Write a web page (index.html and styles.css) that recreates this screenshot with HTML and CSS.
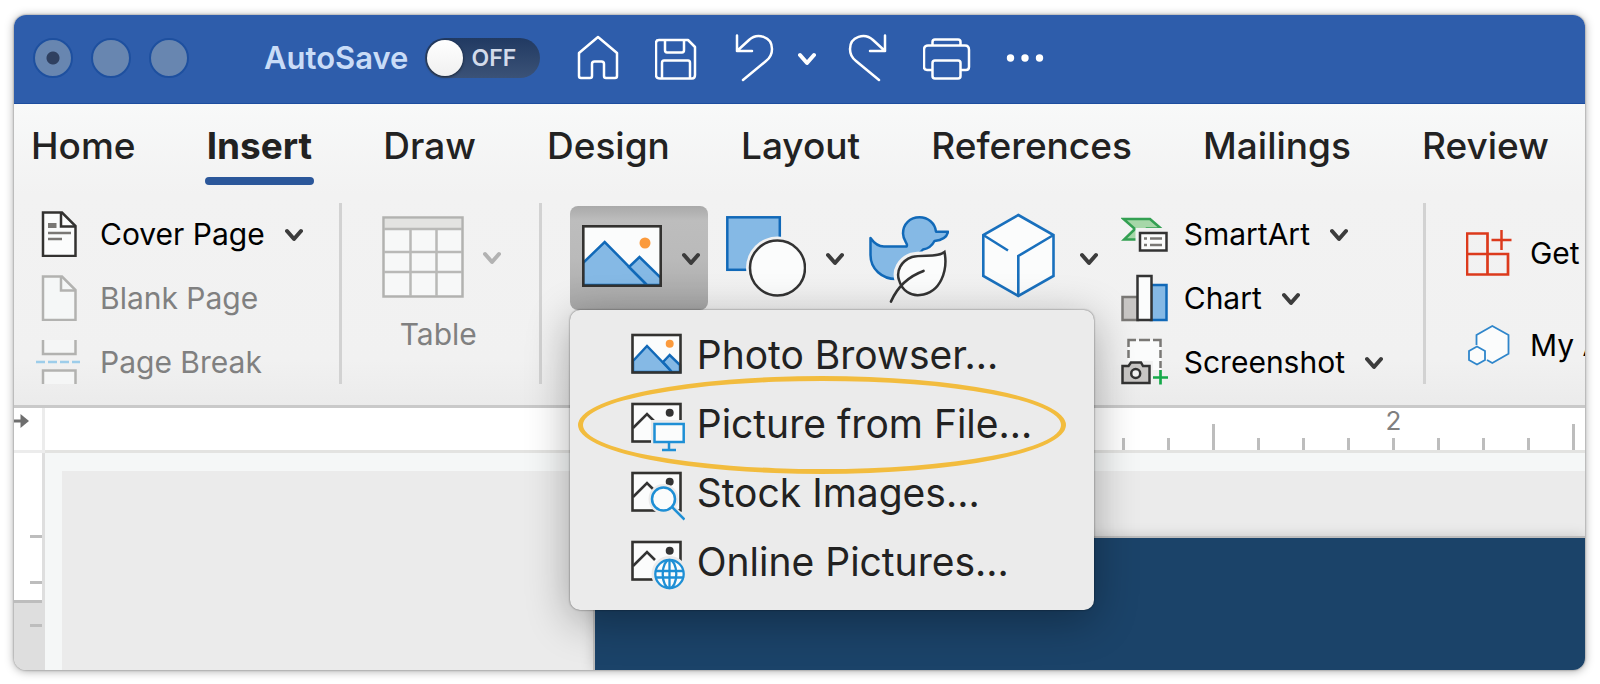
FILE: index.html
```html
<!DOCTYPE html>
<html lang="en">
<head>
<meta charset="utf-8">
<meta name="viewport" content="width=device-width, initial-scale=1">
<title>Document – Insert</title>
<link rel="stylesheet" href="styles.css">
</head>
<body>
<svg class="defs" aria-hidden="true">
  <symbol id="chevron" viewBox="0 0 18 16"><path d="M2 5 L9 13 L16 5" fill="none" stroke="currentColor" stroke-width="4" stroke-linecap="round" stroke-linejoin="round"/></symbol>
  <symbol id="mono-picture" viewBox="0 0 54 52">
    <rect x="1.500" y="4" width="48" height="37.500" fill="#fbfcfc" stroke="#333230" stroke-width="2.600"/>
    <path d="M2 28 L16 14 L24 22" fill="none" stroke="#333" stroke-width="2.600"/>
    <circle cx="38.700" cy="12.700" r="4" fill="#333"/>
  </symbol>
</svg>
<main class="window">
  <header class="titlebar">
    <div class="lights">
      <button class="light light-edited" aria-label="Close"></button>
      <button class="light" aria-label="Minimize"></button>
      <button class="light" aria-label="Zoom"></button>
    </div>
    <label class="autosave">AutoSave
      <span class="switch"><input type="checkbox" class="switch-input"><span class="switch-state">OFF</span></span>
    </label>
    <div class="quick">
      <button class="tool" aria-label="Home"><svg width="42" height="46" viewBox="577 34 42 46"><path d="M598 36 L617 52 V75 Q617 77 615 77 H606 Q604 77 604 75 V63 Q604 60.500 601.500 60.500 H594.500 Q592 60.500 592 63 V75 Q592 77 590 77 H581 Q579 77 579 75 V52 Z"/></svg></button>
      <button class="tool tool-save" aria-label="Save"><svg width="42" height="46" viewBox="655 34 42 46"><path d="M659 39 H688 L695 46 V74 Q695 77.500 692 77.500 H660 Q656 77.500 656 74 V42 Q656 39 659 39 Z M665 39 V49 Q665 51.500 667 51.500 H682 Q684 51.500 684 49 V39 M662 77 V62 Q662 59.500 664 59.500 H688 Q690 59.500 690 62 V77"/></svg></button>
      <button class="tool tool-undo" aria-label="Undo"><svg width="40" height="50" viewBox="736 33 40 50"><path d="M738 35.500 V51 H753 M738 51 L750 40 C758 32.500 773 36 773 49 C773 54 771 58 767 61 L744 80"/></svg></button>
      <button class="tool tool-more" aria-label="Undo history"><svg width="18" height="16"><use href="#chevron"/></svg></button>
      <button class="tool tool-redo" aria-label="Redo"><svg width="40" height="50" viewBox="736 33 40 50"><path transform="translate(1511 0) scale(-1 1)" d="M738 35.500 V51 H753 M738 51 L750 40 C758 32.500 773 36 773 49 C773 54 771 58 767 61 L744 80"/></svg></button>
      <button class="tool tool-print" aria-label="Print"><svg width="48" height="46" viewBox="923 34 48 46"><path d="M932.500 69 H927 Q924 69 924 66 V49 Q924 44.500 928 44.500 H965 Q969 44.500 969 49 V66 Q969 69 966 69 H960.500 M932.500 44.500 V41 Q932.500 38.500 935 38.500 H958 Q960.500 38.500 960.500 41 V44.500 M935 59.500 H958 Q960.500 59.500 960.500 62 V75 Q960.500 77.500 958 77.500 H935 Q932.500 77.500 932.500 75 V62 Q932.500 59.500 935 59.500 Z"/></svg></button>
      <button class="tool tool-dots" aria-label="More"><svg width="38" height="10" viewBox="0 0 38 10"><g fill="#fff" stroke="none"><circle cx="4.500" cy="5" r="3.700"/><circle cx="19" cy="5" r="3.700"/><circle cx="33.500" cy="5" r="3.700"/></g></svg></button>
    </div>
  </header>

  <section class="ribbon">
    <nav class="tabs">
      <button class="tab">Home</button>
      <button class="tab tab-active" aria-current="page">Insert</button>
      <button class="tab">Draw</button>
      <button class="tab">Design</button>
      <button class="tab">Layout</button>
      <button class="tab">References</button>
      <button class="tab">Mailings</button>
      <button class="tab">Review</button>
    </nav>
    <div class="groups">
      <div class="group group-pages">
        <button class="command">
          <svg width="44" height="46" viewBox="36 211 44 46"><path d="M43 212.500 H62 L75.500 226 V256 H43 Z" fill="#fbfcfc" stroke="#333230" stroke-width="2.500"/><path d="M61 212 V226.500 H75.500" fill="none" stroke="#333230" stroke-width="2.500"/><path d="M48 223 h8.500 v5 h-8.500z" fill="#7a7875"/><path d="M48 233 H71 M48 239 H62" stroke="#7a7875" stroke-width="2.500"/></svg>
          <span>Cover Page</span>
          <svg class="chevron" width="18" height="16"><use href="#chevron"/></svg>
        </button>
        <button class="command" disabled>
          <svg width="44" height="46" viewBox="36 211 44 46"><path d="M43 212.500 H62 L75.500 226 V256 H43 Z" fill="#f5f7f7" stroke="#b2b2b0" stroke-width="2.500"/><path d="M61 212 V226.500 H75.500" fill="none" stroke="#b2b2b0" stroke-width="2.500"/></svg>
          <span>Blank Page</span>
        </button>
        <button class="command" disabled>
          <svg width="44" height="46" viewBox="36 337 44 46"><path d="M43 338 V352 H75.500 V338 M43 382 V368.500 H75.500 V382" fill="#f5f6f6" stroke="#b2b2b0" stroke-width="2.500"/><path d="M36 360 h9 m3 0 h9 m3 0 h9 m3 0 h8" stroke="#9dcdea" stroke-width="2.500"/></svg>
          <span>Page Break</span>
        </button>
      </div>

      <div class="group group-table">
        <button class="big-command" disabled>
          <span class="big-row">
            <svg width="82" height="82" viewBox="381 217 82 82"><rect x="382.500" y="218.500" width="79" height="79" fill="#f7f8f8" stroke="#b2b2b0" stroke-width="2.500"/><rect x="384" y="220" width="76" height="9" fill="#e3e3e1"/><path d="M383 230 H461 M383 253 H461 M383 273 H461 M409.500 230 V297 M435.500 230 V297" stroke="#b9b9b7" stroke-width="2.500"/></svg>
            <svg class="chevron" width="18" height="16"><use href="#chevron"/></svg>
          </span>
          <span class="big-label">Table</span>
        </button>
      </div>

      <div class="group group-media">
        <div class="picture-control">
          <button class="picture-button" aria-label="Pictures" aria-haspopup="menu" aria-expanded="true">
            <svg width="80" height="66" viewBox="581 225 80 66"><rect x="582.300" y="226.300" width="77.400" height="59.400" fill="#fbfcfc"/><path d="M582 263 L603.700 242 L646 285 H582 Z" fill="#85b9e5" stroke="#1169b8" stroke-width="2.500"/><path d="M628 267 L638.500 257 L660 278 V285 H646 Z" fill="#85b9e5" stroke="#1169b8" stroke-width="2.500"/><circle cx="644" cy="243" r="5.500" fill="#fb9a3c"/><rect x="582.300" y="226.300" width="77.400" height="59.400" fill="none" stroke="#333230" stroke-width="2.600"/></svg>
            <svg class="chevron" width="18" height="16"><use href="#chevron"/></svg>
          </button>
          <div class="menu" role="menu">
            <button class="menu-item" role="menuitem">
              <svg width="54" height="52" viewBox="0 0 54 52"><rect x="1.500" y="4" width="48" height="37.500" fill="#fbfcfc"/><path d="M2 30 L16 15 L41 41 H2 Z" fill="#85b9e5" stroke="#1169b8" stroke-width="2.500"/><path d="M32 31 L38.700 24 L49 34 V41 H41 Z" fill="#85b9e5" stroke="#1169b8" stroke-width="2.500"/><circle cx="38.700" cy="12.700" r="4" fill="#fb9a3c"/><rect x="1.500" y="4" width="48" height="37.500" fill="none" stroke="#333230" stroke-width="2.600"/></svg>
              <span>Photo Browser...</span>
            </button>
            <button class="menu-item menu-item-circled" role="menuitem">
              <svg width="54" height="52" viewBox="0 0 54 52"><use href="#mono-picture"/><path d="M20 20 H54 V45 H20 Z" fill="#ebebeb"/><path d="M23.500 24 H52.700 V42 H23.500 Z" fill="#fbfcfc" stroke="#1e8fd5" stroke-width="2.500"/><path d="M38 42 V50 M31 50 H45" stroke="#1e8fd5" stroke-width="2.500"/></svg>
              <span>Picture from File...</span>
            </button>
            <button class="menu-item" role="menuitem">
              <svg width="54" height="52" viewBox="0 0 54 52"><use href="#mono-picture"/><circle cx="32.500" cy="30" r="15" fill="#ebebeb"/><path d="M38 36 L54 52" stroke="#ebebeb" stroke-width="7"/><circle cx="32.500" cy="30" r="11.500" fill="#fbfcfc" stroke="#1e8fd5" stroke-width="2.500"/><path d="M41 38 L53.500 50.500" stroke="#1e8fd5" stroke-width="2.500"/></svg>
              <span>Stock Images...</span>
            </button>
            <button class="menu-item" role="menuitem">
              <svg width="54" height="52" viewBox="0 0 54 52"><use href="#mono-picture"/><circle cx="38.500" cy="36" r="18" fill="#ebebeb"/><g fill="none" stroke="#1e8fd5" stroke-width="2.300"><circle cx="38.500" cy="36" r="14.200" fill="#fbfcfc"/><ellipse cx="38.500" cy="36" rx="6.800" ry="14.200"/><path d="M38.500 22 V50 M25 33 H52 M25 39.500 H52"/></g></svg>
              <span>Online Pictures...</span>
            </button>
          </div>
        </div>
        <button class="icon-command command-shapes" aria-label="Shapes">
          <svg width="80" height="92" viewBox="725 213 80 92"><rect x="726.300" y="218.300" width="52.500" height="52.500" fill="#85b9e5" stroke="#1169b8" stroke-width="2.500"/><circle cx="776.500" cy="269" r="31.500" fill="#f2f2f2"/><circle cx="776.500" cy="269" r="27.500" fill="#fbfcfc" stroke="#333" stroke-width="2.500"/></svg>
          <svg class="chevron" width="18" height="16"><use href="#chevron"/></svg>
        </button>
        <button class="icon-command command-icons" aria-label="Icons">
          <svg width="80" height="92" viewBox="868 213 80 92"><path d="M869.500 239 C873 244 877 247.500 883 247.500 H905.500 C908 245 902 242 902 234.500 C902 225 909 218.300 918.500 218.300 C927 218.300 934 224 935 232.700 H947 C946 238 942 241 933.500 242 C931 247 928 249.500 922 250.500 L895 280 C881 280 869.500 270 869.500 256 Z" fill="#85b9e5" stroke="#1169b8" stroke-width="2.500" stroke-linejoin="round"/><path d="M943.500 253 C936 259 922 255 911 258 C900 262 895 272 898 281 C901 292 910 297 919 296 C940 294 947 271 943.500 253 Z" fill="#f2f2f2" stroke="#f2f2f2" stroke-width="9"/><path d="M943.500 253 C936 259 922 255 911 258 C900 262 895 272 898 281 C901 292 910 297 919 296 C940 294 947 271 943.500 253 Z" fill="#fbfcfc" stroke="#333" stroke-width="2.500"/><path d="M890 302.500 C896 289 906 278 922.500 272" fill="none" stroke="#333" stroke-width="2.700" stroke-linecap="round"/></svg>
        </button>
        <button class="icon-command command-models" aria-label="3D Models">
          <svg width="73" height="92" viewBox="981 212 73 92"><path d="M1017.300 215 L1052.500 235 V276 L1017.300 296 L982.300 276 V235 Z" fill="#fbfcfc" stroke="#1970bd" stroke-width="2.600"/><path d="M982.300 235 L1007 250.500 M1017.300 296 V256 L1052.500 235" fill="none" stroke="#1970bd" stroke-width="2.600"/></svg>
          <svg class="chevron" width="18" height="16"><use href="#chevron"/></svg>
        </button>
      </div>

      <div class="group group-art">
        <button class="command">
          <svg width="48" height="46" viewBox="1119 211 48 46"><path d="M1121.500 219 H1148 L1159 228.500 H1145 V239.500 H1122 L1133 229 Z" fill="#a6d7a8" stroke="#33a052" stroke-width="2.500"/><path d="M1133.500 228 H1168 V254 H1133.500 Z" fill="#f1f1f1"/><path d="M1138 233 H1164.500 V250.500 H1138 Z" fill="#fbfcfc" stroke="#333" stroke-width="2.500"/><path d="M1142 238.500 h3 m3 0 h12 M1142 245 h3 m3 0 h12" stroke="#7a7875" stroke-width="2.500"/></svg>
          <span>SmartArt</span>
          <svg class="chevron" width="18" height="16"><use href="#chevron"/></svg>
        </button>
        <button class="command">
          <svg width="48" height="48" viewBox="1119 274 48 48"><g stroke-width="2.500"><path d="M1120.500 297 H1136 V320 H1120.500 Z" fill="#c8c6c4" stroke="#7a7875"/><path d="M1149 285 H1164.500 V320 H1149 Z" fill="#85b9e5" stroke="#1169b8"/><path d="M1135.500 276 H1149.500 V320 H1135.500 Z" fill="#fbfcfc" stroke="#333"/></g></svg>
          <span>Chart</span>
          <svg class="chevron" width="18" height="16"><use href="#chevron"/></svg>
        </button>
        <button class="command">
          <svg width="48" height="48" viewBox="1119 338 48 48"><path d="M1126 340 H1159 V370 H1126 Z" fill="#fbfcfc"/><path d="M1126.500 347 V340 H1134 M1137 340 H1148 M1151 340 H1158.500 V347 M1158.500 350 V358 M1158.500 361 V368 M1126.500 350 V358" fill="none" stroke="#7a7875" stroke-width="2.500"/><path d="M1117 361 H1151 V386 H1117 Z" fill="#f1f1f1"/><path d="M1120.500 366 H1126.500 L1129 362.500 H1139 L1141 366 H1147.500 V383 H1120.500 Z" fill="#c8c6c4" stroke="#333" stroke-width="2.500"/><circle cx="1133.700" cy="373.500" r="4.500" fill="#f2f2f2" stroke="#333" stroke-width="2.500"/><path d="M1158.500 370 V384.500 M1151 377.500 H1166" stroke="#16a94a" stroke-width="2.700"/></svg>
          <span>Screenshot</span>
          <svg class="chevron" width="18" height="16"><use href="#chevron"/></svg>
        </button>
      </div>

      <div class="group group-addins">
        <button class="command">
          <svg width="46" height="50" viewBox="1464 227 46 50"><path d="M1465 232.500 H1485.500 V273.500 H1465 Z M1465 253 H1506 V273.500 H1485.500" fill="none" stroke="#dc3a1c" stroke-width="2.700"/><path d="M1499.500 229 V249 M1489.500 239 H1509.500" stroke="#dc3a1c" stroke-width="2.500"/></svg>
          <span>Get</span>
        </button>
        <button class="command">
          <svg width="46" height="46" viewBox="1464 321 46 46"><path d="M1474.500 344 V334 L1490.300 325 L1506.500 334 V352.700 L1490.300 362 L1485 359" fill="#fbfcfc" stroke="#2f86cb" stroke-width="1.800"/><path d="M1475 345.500 L1483 350 V359 L1475 363.500 L1467 359 V350 Z" fill="#fbfcfc" stroke="#2f86cb" stroke-width="1.800"/></svg>
          <span>My A</span>
        </button>
      </div>
    </div>
  </section>

  <section class="workspace">
    <div class="corner"><svg width="15" height="16" viewBox="0 0 15 16"><path d="M0 8 H8" stroke="#6e6e6e" stroke-width="3"/><path d="M6.500 1 L15 8 L6.500 15 Z" fill="#6e6e6e"/></svg></div>
    <ol class="ruler">
      <li class="mark"></li><li class="mark"></li><li class="mark mark-half"></li><li class="mark"></li><li class="mark"></li><li class="mark"></li><li class="mark"><span>2</span></li><li class="mark"></li><li class="mark"></li><li class="mark"></li><li class="mark mark-half"></li>
    </ol>
    <div class="side-ruler">
      <div class="side-margin"><i class="side-mark"></i><i class="side-mark"></i></div>
      <div class="side-body"><i class="side-mark"></i></div>
    </div>
    <div class="canvas"><article class="page"></article></div>
  </section>
</main>
</body>
</html>
```
FILE: styles.css
```css
*, *::before, *::after { box-sizing: border-box; }

body {
  margin: 0;
  min-height: 100vh;
  padding: 15px 15px 14px 14px;
  display: flex;
  background: #fff;
  font-family: Inter, "Liberation Sans", sans-serif;
  color: #000;
}

.defs { position: absolute; width: 0; height: 0; }

button {
  margin: 0;
  padding: 0;
  border: 0;
  background: none;
  font: inherit;
  color: inherit;
  white-space: nowrap;
}

svg { display: block; flex: none; }

.window {
  flex: 1;
  min-width: 0;
  display: flex;
  flex-direction: column;
  overflow: hidden;
  border-radius: 12px;
  background: #f2f2f2;
  box-shadow: 0 0 2px rgba(0, 0, 0, .45), 0 1px 10px rgba(0, 0, 0, .35);
}

/* Title bar */
.titlebar {
  height: 89px;
  flex: none;
  display: flex;
  align-items: center;
  padding: 0 20px 2px 19px;
  background: #2e5dab;
  border-bottom: 1px solid #1d4e9f;
}

.lights { display: flex; gap: 18px; }

.light {
  width: 40px;
  height: 40px;
  border: 2px solid #1e509f;
  border-radius: 50%;
  background: #6886b0;
}

.light-edited { background: radial-gradient(circle, #2f4060 6px, #6886b0 7px); }

.autosave {
  display: flex;
  align-items: center;
  gap: 17px;
  margin-left: 75px;
  font-size: 31px;
  font-weight: 600;
  line-height: 40px;
  color: #c9dcf7;
}

.switch { position: relative; display: flex; }

.switch-input {
  appearance: none;
  width: 115px;
  height: 40px;
  margin: 0;
  padding: 2px;
  border-radius: 20px;
  background: linear-gradient(#213a62, #3b5277);
}

.switch-input::before {
  content: "";
  display: block;
  width: 36px;
  height: 36px;
  border-radius: 50%;
  background: linear-gradient(#fff, #f0f0f0);
  box-shadow: 0 1px 3px rgba(0, 0, 0, .6);
}

.switch-input:checked::before { margin-left: auto; }

.switch-state {
  position: absolute;
  left: 46px;
  top: 0;
  font-size: 23px;
  line-height: 40px;
  color: #d3dbea;
}

.quick { display: flex; align-items: center; margin-left: 37px; color: #fff; }
.tool svg { fill: none; stroke: #fff; stroke-width: 2.5; stroke-linecap: round; stroke-linejoin: round; }
.tool-save { margin-left: 36px; }
.tool-undo { margin-left: 38px; }
.tool-more { margin-left: 23px; }
.tool-redo { margin-left: 32px; }
.tool-print { margin-left: 35px; }
.tool-dots { margin-left: 35px; }

/* Ribbon */
.ribbon {
  flex: none;
  background: linear-gradient(#f8f9f9, #f2f2f2 30%, #f1f1f1 85%, #ebebeb);
  border-bottom: 3px solid #c9c9c9;
}

.tabs {
  display: flex;
  justify-content: space-between;
  padding: 20px 32px 18px 13px;
}

.tab {
  padding: 0 4px;
  font-size: 37px;
  font-weight: 500;
  line-height: 44px;
  color: #222;
}

.tab::after {
  content: "";
  display: block;
  height: 8px;
  margin: 9px -2px 0;
  border-radius: 4px;
}

.tab-active { font-weight: 700; }
.tab-active::after { background: #2b579a; }

.groups { display: flex; padding-bottom: 21px; }

.group {
  flex: none;
  display: flex;
  font-size: 30px;
  border-right: 3px solid #d2d2d2;
}

.group-pages, .group-art { flex-direction: column; gap: 20px; padding-top: 9px; }
.group-pages { padding-left: 22px; padding-right: 36px; }

.command { display: flex; align-items: center; height: 44px; gap: 20px; }
.command:disabled { color: #808080; }
.chevron { color: #3c3c3c; }
.big-command:disabled .chevron { color: #b2b2b2; }

.group-table { padding: 13px 38px 0 40px; }
.big-command { display: flex; flex-direction: column; align-items: center; gap: 18px; color: #808080; }
.big-row { display: flex; align-items: center; gap: 19px; }
.big-label { line-height: 36px; padding-right: 6px; }

.group-media { align-items: flex-start; padding: 3px 23px 0 28px; border-right: 0; }
.picture-control { position: relative; }

.picture-button {
  display: flex;
  align-items: center;
  gap: 20px;
  height: 104px;
  padding: 0 8px 0 12px;
  border-radius: 8px;
  background: linear-gradient(#a9a9a9, #bdbdbd 14%, #bababa 50%, #a8a8a8);
}

.icon-command { display: flex; align-items: center; height: 104px; }
.command-shapes { gap: 20px; margin-left: 18px; }
.command-icons { margin-left: 25px; }
.command-models { gap: 25px; margin-left: 33px; }

.group-art { padding-right: 40px; }
.group-art .command { gap: 15px; }
.group-art .chevron { margin-left: 5px; }

.group-addins { flex-direction: column; gap: 48px; padding-top: 28px; padding-left: 40px; border-right: 0; }
.group-addins .command { gap: 18px; }

/* Pictures menu */
.menu {
  position: absolute;
  z-index: 2;
  top: 104px;
  left: 0;
  min-width: 524px;
  padding: 12px 0;
  border-radius: 10px;
  background: #ebebeb;
  box-shadow: 0 0 2px rgba(0, 0, 0, .6), 0 10px 44px rgba(0, 0, 0, .32);
}

.menu-item {
  position: relative;
  display: flex;
  align-items: center;
  gap: 12px;
  width: 100%;
  height: 69px;
  padding-left: 61px;
  font-size: 39px;
  color: #222;
}

.menu-item span { padding-bottom: 4px; }

.menu-item-circled::after {
  content: "";
  position: absolute;
  left: 8px;
  top: -15px;
  width: 488px;
  height: 98px;
  border: 5px solid #f2bc3e;
  border-radius: 50%;
}

/* Document area */
.workspace {
  flex: 1;
  display: grid;
  grid-template-columns: 31px 1fr;
  grid-template-rows: 45px 1fr;
}

.corner {
  padding-top: 5px;
  background: #fff;
  border-right: 3px solid #ececec;
  border-bottom: 3px solid #ececec;
}

.ruler {
  display: flex;
  justify-content: flex-end;
  margin: 0;
  padding: 0;
  list-style: none;
  background: #fff;
  border-bottom: 3px solid #e3e3e1;
}

.mark {
  flex: none;
  width: 45px;
  display: flex;
  flex-direction: column;
  align-items: center;
  justify-content: flex-end;
  font-size: 26px;
  line-height: 26px;
  color: #808080;
}

.mark:last-child { margin-right: -11px; }
.mark span { margin-bottom: 4px; }
.mark::after { content: ""; width: 3px; height: 12px; background: #bdbdbd; }
.mark-half::after { height: 26px; }

.side-ruler { display: flex; flex-direction: column; border-right: 3px solid #dedede; }

.side-margin {
  display: flex;
  flex-direction: column;
  align-items: flex-end;
  gap: 43px;
  padding: 82px 0 16px;
  background: #fff;
  border-bottom: 3px solid #bdbdbd;
}

.side-body {
  flex: 1;
  display: flex;
  flex-direction: column;
  align-items: flex-end;
  padding-top: 21px;
  background: #dedede;
}

.side-mark { width: 12px; height: 3px; background: #bdbdbd; }

.canvas {
  display: flex;
  padding: 67px 0 0 533px;
  border-top: 18px solid #f5f7f7;
  border-left: 17px solid #f5f7f7;
  background: #ebebeb;
}

.page {
  flex: 1;
  background: #1b4369;
  box-shadow: 0 0 0 2px #bcbcbc, 0 0 14px rgba(0, 0, 0, .2);
}
```
